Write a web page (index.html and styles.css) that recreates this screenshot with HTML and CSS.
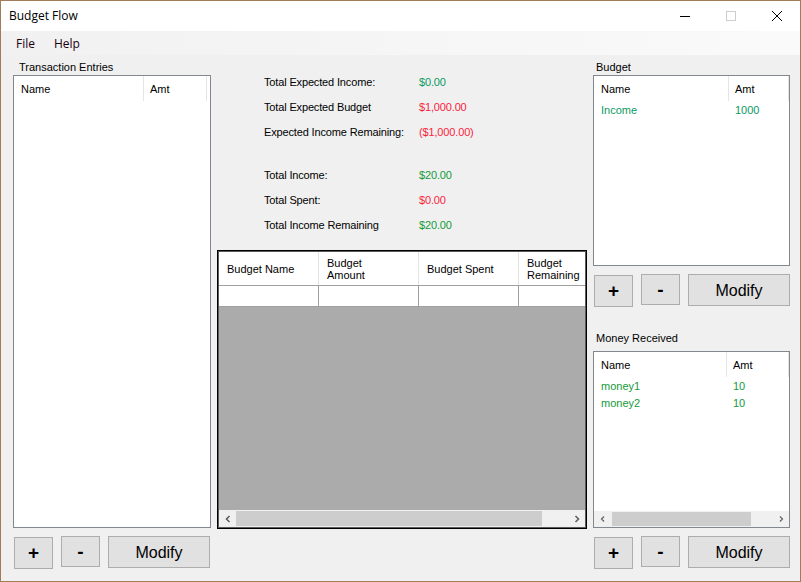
FILE: index.html
```html
<!DOCTYPE html>
<html>
<head>
<meta charset="utf-8">
<title>Budget Flow</title>
<link rel="stylesheet" href="styles.css">
</head>
<body>
<div class="window">
  <div class="titlebar">
    <span class="title">Budget Flow</span>
    <div class="controls">
      <span class="ctl"><svg width="12" height="12" viewBox="0 0 12 12"><path d="M1 6.5h10" stroke="#000" stroke-width="1"/></svg></span>
      <span class="ctl"><svg width="12" height="12" viewBox="0 0 12 12"><rect x="1.5" y="1.5" width="9" height="9" fill="none" stroke="#cccccc" stroke-width="1"/></svg></span>
      <span class="ctl"><svg width="12" height="12" viewBox="0 0 12 12"><path d="M1 1L11 11M11 1L1 11" stroke="#000" stroke-width="1"/></svg></span>
    </div>
  </div>
  <div class="menubar">
    <span class="menu">File</span>
    <span class="menu">Help</span>
  </div>
  <div class="main">
    <div class="col">
      <div class="label left-label">Transaction Entries</div>
      <div class="listbox tall">
        <div class="lv-head">
          <span class="h-name w130">Name</span>
          <span class="h-amt w63">Amt</span>
        </div>
      </div>
      <div class="btnrow">
        <button class="btn plus">+</button>
        <button class="btn minus">-</button>
        <button class="btn modify">Modify</button>
      </div>
    </div>

    <div class="col mid">
      <div class="summary">
        <div class="srow"><span class="sl">Total Expected Income:</span><span class="sv teal">$0.00</span></div>
        <div class="srow"><span class="sl">Total Expected Budget</span><span class="sv red">$1,000.00</span></div>
        <div class="srow"><span class="sl">Expected Income Remaining:</span><span class="sv red">($1,000.00)</span></div>
        <div class="sgap"></div>
        <div class="srow"><span class="sl">Total Income:</span><span class="sv green">$20.00</span></div>
        <div class="srow"><span class="sl">Total Spent:</span><span class="sv red">$0.00</span></div>
        <div class="srow"><span class="sl">Total Income Remaining</span><span class="sv green">$20.00</span></div>
      </div>
      <div class="grid">
        <div class="g-head">
          <div class="gc">Budget Name</div>
          <div class="gc">Budget<br>Amount</div>
          <div class="gc">Budget Spent</div>
          <div class="gc last">Budget<br>Remaining</div>
        </div>
        <div class="g-row">
          <div class="gd"></div>
          <div class="gd"></div>
          <div class="gd"></div>
          <div class="gd last"></div>
        </div>
        <div class="g-fill"></div>
        <div class="hscroll">
          <span class="arr"><svg width="8" height="8" viewBox="0 0 8 8"><path d="M5.5 1L2.5 4L5.5 7" fill="none" stroke="#606060" stroke-width="1.6"/></svg></span>
          <div class="track"><div class="thumb g-thumb"></div></div>
          <span class="arr"><svg width="8" height="8" viewBox="0 0 8 8"><path d="M2.5 1L5.5 4L2.5 7" fill="none" stroke="#606060" stroke-width="1.6"/></svg></span>
        </div>
      </div>
    </div>

    <div class="col">
      <div class="label right-label">Budget</div>
      <div class="listbox budget">
        <div class="lv-head">
          <span class="h-name w135">Name</span>
          <span class="h-amt w60">Amt</span>
        </div>
        <div class="lv-row teal"><span class="w135 c-name">Income</span><span class="w60 c-amt">1000</span></div>
      </div>
      <div class="btnrow">
        <button class="btn plus">+</button>
        <button class="btn minus">-</button>
        <button class="btn modify">Modify</button>
      </div>
      <div class="label right-label money-label">Money Received</div>
      <div class="listbox money">
        <div class="lv-head">
          <span class="h-name w133">Name</span>
          <span class="h-amt w62">Amt</span>
        </div>
        <div class="lv-row green"><span class="w133 c-name">money1</span><span class="w62 c-amt">10</span></div>
        <div class="lv-row green"><span class="w133 c-name">money2</span><span class="w62 c-amt">10</span></div>
        <div class="lv-spacer"></div>
        <div class="hscroll small">
          <span class="arr"><svg width="8" height="8" viewBox="0 0 8 8"><path d="M5 1.5L2.5 4L5 6.5" fill="none" stroke="#606060" stroke-width="1.2"/></svg></span>
          <div class="track"><div class="thumb m-thumb"></div></div>
          <span class="arr"><svg width="8" height="8" viewBox="0 0 8 8"><path d="M3 1.5L5.5 4L3 6.5" fill="none" stroke="#606060" stroke-width="1.2"/></svg></span>
        </div>
      </div>
      <div class="btnrow bottom">
        <button class="btn plus">+</button>
        <button class="btn minus">-</button>
        <button class="btn modify">Modify</button>
      </div>
    </div>
  </div>
</div>
</body>
</html>
```

FILE: styles.css
```css
* { box-sizing: border-box; }
html, body { margin: 0; padding: 0; }
body {
  width: 801px;
  height: 582px;
  overflow: hidden;
  font-family: "Liberation Sans", Arial, sans-serif;
  font-size: 11px;
  color: #000;
}
.window {
  width: 801px;
  height: 582px;
  border: 1px solid #a27b58;
  background: #f0f0f0;
  display: flex;
  flex-direction: column;
}
.titlebar {
  height: 30px;
  background: #fff;
  display: flex;
  align-items: center;
  justify-content: space-between;
}
.title {
  font-family: "Open Sans", "Noto Sans", sans-serif;
  font-size: 12px;
  padding-left: 8px;
  padding-bottom: 1px;
  color: #000;
}
.controls { display: flex; height: 30px; }
.ctl {
  width: 46px;
  height: 30px;
  display: flex;
  align-items: center;
  justify-content: center;
}
.menubar {
  height: 24px;
  background: linear-gradient(to right, #f1f1f1, #fafafa);
  display: flex;
  align-items: center;
  padding-left: 8px;
  font-family: "Open Sans", "Noto Sans", sans-serif;
  font-size: 12px;
}
.menu { padding: 0 7px 0 7px; color: #1a0010; }
.menu + .menu { padding-left: 12px; }

.main {
  flex: 1;
  display: grid;
  grid-template-columns: 198px 370px 197px;
  column-gap: 6px;
  padding-left: 12px;
}
.col { display: flex; flex-direction: column; }
.label {
  height: 20px;
  padding-top: 6px;
  line-height: 13px;
  color: #000;
}
.left-label { padding-left: 6px; }
.right-label { padding-left: 3px; }

.listbox {
  background: #fff;
  border: 1px solid #828790;
  display: flex;
  flex-direction: column;
  overflow: hidden;
}
.tall { height: 453px; }
.budget { height: 191px; }
.money { height: 177px; }
.money-label { margin-top: 20px; height: 24px; padding-top: 5px; }

.lv-head {
  height: 25px;
  display: flex;
  align-items: center;
  flex-shrink: 0;
}
.h-name, .h-amt {
  height: 25px;
  line-height: 25px;
  padding-top: 1px;
  border-right: 1px solid #e5e5e5;
}
.h-name { padding-left: 7px; }
.h-amt { padding-left: 6px; }
.w130 { width: 130px; }
.w63 { width: 63px; }
.w135 { width: 135px; }
.w60 { width: 60px; }
.w133 { width: 133px; }
.w62 { width: 62px; }

.lv-row {
  height: 17px;
  line-height: 17px;
  padding-top: 1px;
  display: flex;
}
.c-name { padding-left: 7px; }
.c-amt { padding-left: 6px; }
.lv-spacer { flex: 1; }

.teal { color: #0a9a62; }
.green { color: #139a3a; }
.red { color: #f81e3c; }

.btnrow {
  display: flex;
  align-items: flex-start;
  margin-top: 8px;
  height: 33px;
  padding-left: 1px;
}
.btnrow.bottom { margin-top: 8px; }
.btn {
  height: 32px;
  border: 1px solid #adadad;
  background: #e1e1e1;
  font-family: "Liberation Sans", Arial, sans-serif;
  color: #000;
  padding: 0;
  margin: 0;
}
.plus { width: 39px; font-size: 19px; font-weight: bold; margin-top: 1px; }
.minus { width: 39px; font-size: 19px; font-weight: bold; margin-left: 8px; height: 31px; }
.modify { width: 102px; font-size: 16px; margin-left: 8px; height: 32px; padding-top: 2px; }

.mid { padding-top: 14px; }
.summary { padding-left: 47px; letter-spacing: -0.15px; }
.srow {
  height: 25px;
  display: flex;
  align-items: center;
}
.sl { width: 155px; }
.sgap { height: 18px; }

.grid {
  margin-top: 13px;
  height: 279px;
  border: 1px solid #000;
  box-shadow: inset 1px 1px 0 #5a5a5a, inset -1px -1px 0 #5a5a5a;
  padding: 1px;
  display: flex;
  flex-direction: column;
  overflow: hidden;
}
.g-head {
  height: 33px;
  background: #fff;
  display: flex;
  flex-shrink: 0;
}
.gc {
  width: 100px;
  flex-shrink: 0;
  border-right: 1px solid #e3e3e3;
  padding-left: 8px;
  display: flex;
  align-items: center;
  line-height: 12px;
}
.gc.last, .gd.last { width: 68px; border-right: none; }
.g-row {
  height: 22px;
  background: #fff;
  display: flex;
  border-top: 1px solid #a0a0a0;
  border-bottom: 1px solid #a0a0a0;
  flex-shrink: 0;
}
.gd {
  width: 100px;
  flex-shrink: 0;
  border-right: 1px solid #a0a0a0;
}
.g-fill { flex: 1; background: #ababab; }
.hscroll {
  height: 17px;
  background: #f0f0f0;
  display: flex;
  align-items: center;
  flex-shrink: 0;
}
.arr {
  width: 17px;
  height: 17px;
  display: flex;
  align-items: center;
  justify-content: center;
}
.track { flex: 1; height: 17px; display: flex; align-items: center; }
.thumb { height: 15px; background: #cdcdcd; }
.g-thumb { width: 306px; }
.hscroll.small { height: 16px; }
.m-thumb { width: 139px; height: 14px; margin-left: 1px; }
```
